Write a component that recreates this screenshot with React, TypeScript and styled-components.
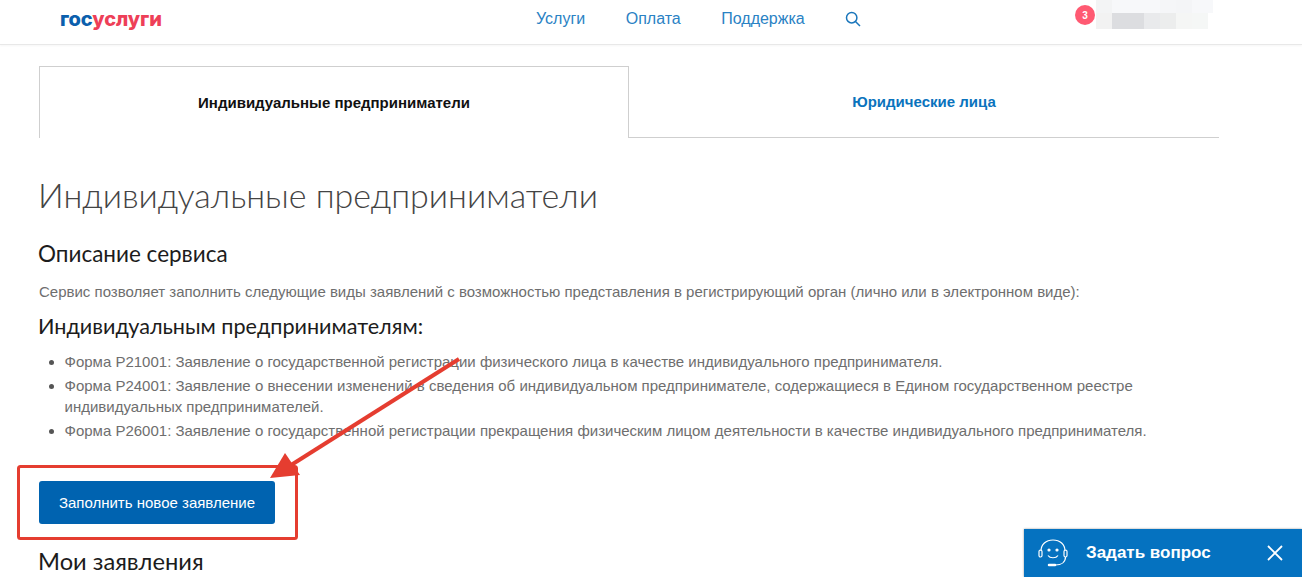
import React from "react";
import styled, { createGlobalStyle } from "styled-components";

const Global = createGlobalStyle`
  html, body { margin: 0; padding: 0; background: #fff; }
  body { font-family: "Liberation Sans", Arial, sans-serif; overflow: hidden; }
  #root { height: 577px; overflow: hidden; position: relative; }
`;

const Header = styled.header`
  height: 44px;
  border-bottom: 1px solid #e8e8e8;
  box-shadow: 0 1px 2px rgba(0, 0, 0, 0.04);
  display: flex;
  align-items: center;
  position: relative;
  box-sizing: content-box;
`;
const Logo = styled.div`
  margin-left: 60px;
  width: 476px;
  font: 800 20px/1 "Inter", "Liberation Sans", sans-serif;
  letter-spacing: -0.1px;
  margin-top: -6px;
`;
const LogoPart = styled.span<{ $c: string }>`
  color: ${(p) => p.$c};
`;
const Nav = styled.nav`
  display: flex;
  align-items: center;
  gap: 40.5px;
  margin-top: -7px;
`;
const NavLink = styled.a`
  color: #2a82c4;
  font-size: 16px;
`;
const SearchIcon = styled.svg`
  width: 16px;
  height: 16px;
  display: block;
`;
const UserArea = styled.div`
  position: absolute;
  left: 1075px;
  top: 0;
  display: flex;
`;
const Badge = styled.div`
  width: 20px;
  height: 20px;
  margin-top: 5px;
  border-radius: 50%;
  background: #ff5a72;
  color: #fff;
  font-size: 10px;
  font-weight: 700;
  display: flex;
  align-items: center;
  justify-content: center;
`;
const Mosaic = styled.div`
  display: grid;
  grid-template-columns: 16px 32px 16px 16px 16px 16px 5px;
  grid-auto-rows: 16px;
  width: 117px;
  margin: -3px 0 0 1px;
`;
const Cell = styled.div<{ $c: string }>`
  background: ${(p) => p.$c};
`;

const Main = styled.main`
  padding: 21px 83px 0 39px;
`;
const Tabs = styled.div`
  display: flex;
  height: 72px;
`;
const ActiveTab = styled.div`
  width: 590px;
  box-sizing: border-box;
  border: 1px solid #cfcfcf;
  border-bottom: none;
  display: flex;
  align-items: center;
  justify-content: center;
  font-size: 15px;
  font-weight: 700;
  color: #111;
`;
const Tab = styled.div`
  flex: 1;
  box-sizing: border-box;
  border-bottom: 1px solid #cfcfcf;
  display: flex;
  align-items: center;
  justify-content: center;
  font-size: 15px;
  font-weight: 700;
  color: #0a73bd;
`;
const Title = styled.h1`
  margin: 34px 0 0 -1px;
  font: 300 34px/46px "Lato", "Open Sans", sans-serif;
  color: #444;
`;
const H2 = styled.h2<{ $top?: number; $size?: number }>`
  margin: ${(p) => p.$top ?? 21}px 0 0 -1px;
  font: 400 ${(p) => p.$size ?? 22.5}px/30px "Lato", "Open Sans", sans-serif;
  color: #1c1c1c;
`;
const Paragraph = styled.p`
  margin: 12px 0 0;
  font-size: 15px;
  line-height: 21px;
  color: #6e6e6e;
`;
const H3 = styled.h3`
  margin: 10px 0 0 -1px;
  font: 400 21.6px/28px "Lato", "Open Sans", sans-serif;
  color: #1c1c1c;
`;
const List = styled.ul`
  margin: 11px 0 0;
  padding: 0 0 0 25.5px;
  font-size: 15px;
  line-height: 21px;
  color: #6e6e6e;
  width: 1130px;
`;
const Item = styled.li`
  margin-bottom: 3px;
  &::marker { color: #555; }
`;
const Primary = styled.button`
  display: block;
  margin-top: 40px;
  width: 236px;
  height: 43px;
  border: none;
  border-radius: 3px;
  background: #0063b0;
  color: #fff;
  font: 15px "Liberation Sans", sans-serif;
`;
const Annotation = styled.svg`
  position: absolute;
  left: 0;
  top: 0;
  width: 1302px;
  height: 577px;
  pointer-events: none;
`;
const Chat = styled.div`
  position: absolute;
  left: 1024px;
  top: 529px;
  width: 278px;
  height: 48px;
  background: #0572c0;
  color: #fff;
  display: flex;
  align-items: center;
  box-shadow: 0 0 2px rgba(0, 0, 0, 0.4);
`;
const ChatIcon = styled.svg`
  width: 32px;
  height: 32px;
  margin-left: 13px;
`;
const ChatLabel = styled.div`
  margin-left: 17px;
  font-size: 17px;
  font-weight: 700;
  flex: 1;
`;
const Close = styled.svg`
  width: 16px;
  height: 16px;
  margin-right: 19px;
`;

const mosaic = [
  "#f3f4f5","#f7f8fa","#f7f8fa","#f5f6f8","#f4f5f7","#f7f8fa","#f7f8fa",
  "#f2f2f2","#dcdde0","#e9eaec","#eceded","#f5f6f5","#f5f7f6","#fff",
];

export default function App() {
  return (
    <>
      <Global />
      <Header>
        <Logo>
          <LogoPart $c="#0b5fad">гос</LogoPart>
          <LogoPart $c="#ee3f58">услуги</LogoPart>
        </Logo>
        <Nav>
          <NavLink>Услуги</NavLink>
          <NavLink>Оплата</NavLink>
          <NavLink>Поддержка</NavLink>
          <SearchIcon viewBox="0 0 16 16" fill="none" stroke="#1a76bb" strokeWidth="1.5">
            <circle cx="6.7" cy="6.7" r="5.2" />
            <path d="M10.5 10.5 15 15" />
          </SearchIcon>
        </Nav>
        <UserArea>
          <Badge>3</Badge>
          <Mosaic>
            {mosaic.map((c, i) => (
              <Cell key={i} $c={c} />
            ))}
          </Mosaic>
        </UserArea>
      </Header>
      <Main>
        <Tabs>
          <ActiveTab>Индивидуальные предприниматели</ActiveTab>
          <Tab>Юридические лица</Tab>
        </Tabs>
        <Title>Индивидуальные предприниматели</Title>
        <H2>Описание сервиса</H2>
        <Paragraph>
          Сервис позволяет заполнить следующие виды заявлений с возможностью представления в регистрирующий орган (лично или в электронном виде):
        </Paragraph>
        <H3>Индивидуальным предпринимателям:</H3>
        <List>
          <Item>Форма Р21001: Заявление о государственной регистрации физического лица в качестве индивидуального предпринимателя.</Item>
          <Item>Форма Р24001: Заявление о внесении изменений в сведения об индивидуальном предпринимателе, содержащиеся в Едином государственном реестре индивидуальных предпринимателей.</Item>
          <Item>Форма Р26001: Заявление о государственной регистрации прекращения физическим лицом деятельности в качестве индивидуального предпринимателя.</Item>
        </List>
        <Primary>Заполнить новое заявление</Primary>
        <H2 $top={22} $size={23.7}>Мои заявления</H2>
      </Main>
      <Annotation viewBox="0 0 1302 577" fill="none">
        <rect x="18.500" y="466.500" width="278" height="72" rx="2" stroke="#e53d30" strokeWidth="3" />
        <path d="M459 359 L288 467" stroke="#e53d30" strokeWidth="4" />
        <path d="M270 478 L285 453 L300 475 Z" fill="#e53d30" />
      </Annotation>
      <Chat>
        <ChatIcon viewBox="0 0 32 32" fill="none" stroke="#fff" strokeWidth="1.2">
          <path d="M4 14c0-6.500 5-11 12-11s12 4.500 12 11" />
          <rect x="2" y="13" width="3" height="7" rx="1.500" />
          <rect x="27" y="13" width="3" height="7" rx="1.500" />
          <circle cx="12" cy="13" r="1" fill="#fff" />
          <circle cx="20" cy="13" r="1" fill="#fff" />
          <path d="M11 18.500c2 3 8 3 10 0" />
          <path d="M28.500 20c0 5-4 8-10 8" />
          <path d="M12 28h6" strokeWidth="2.500" strokeLinecap="round" />
        </ChatIcon>
        <ChatLabel>Задать вопрос</ChatLabel>
        <Close viewBox="0 0 16 16" stroke="#fff" strokeWidth="1.8" fill="none">
          <path d="M1 1 15 15M15 1 1 15" />
        </Close>
      </Chat>
    </>
  );
}
